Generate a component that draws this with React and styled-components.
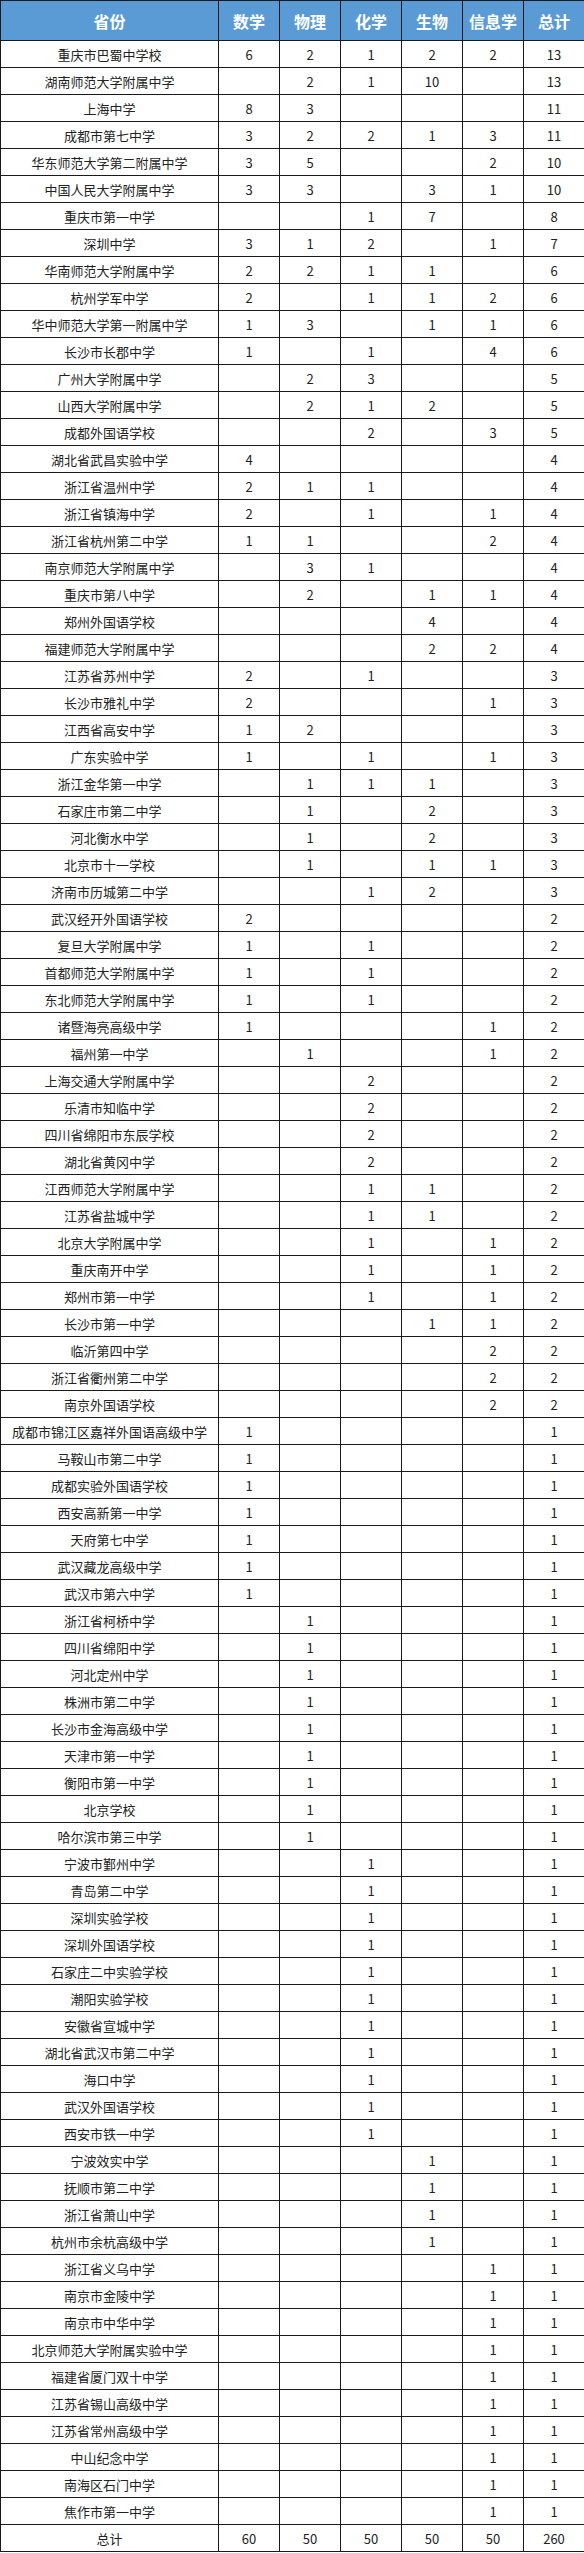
import React from 'react';
import styled, { createGlobalStyle } from 'styled-components';

const GlobalStyle = createGlobalStyle`
  html, body {
    margin: 0;
    padding: 0;
    background: #fff;
  }
  body {
    font-family: "Noto Sans CJK SC", "Noto Sans", sans-serif;
  }
`;

const Table = styled.table`
  width: 584px;
  border-collapse: collapse;
  table-layout: fixed;
  color: #222;
`;

const Col = styled.col`
  width: ${(p) => (p.$wide ? '218px' : '61px')};
`;

const HeadRow = styled.tr`
  height: 40px;
  background-color: #5b9bd5;
`;

const HeadCell = styled.th`
  border: 1px solid #1a1a1a;
  color: #fff;
  font-size: 16px;
  font-weight: 700;
  text-align: center;
  padding: 0;
`;

const Row = styled.tr`
  height: 27px;
`;

const Cell = styled.td`
  border: 1px solid #1a1a1a;
  font-size: 13px;
  text-align: center;
  padding: 0;
  white-space: nowrap;
  line-height: 1;
`;

const headers = ['省份', '数学', '物理', '化学', '生物', '信息学', '总计'];

const rows = `重庆市巴蜀中学校,6,2,1,2,2,13
湖南师范大学附属中学,,2,1,10,,13
上海中学,8,3,,,,11
成都市第七中学,3,2,2,1,3,11
华东师范大学第二附属中学,3,5,,,2,10
中国人民大学附属中学,3,3,,3,1,10
重庆市第一中学,,,1,7,,8
深圳中学,3,1,2,,1,7
华南师范大学附属中学,2,2,1,1,,6
杭州学军中学,2,,1,1,2,6
华中师范大学第一附属中学,1,3,,1,1,6
长沙市长郡中学,1,,1,,4,6
广州大学附属中学,,2,3,,,5
山西大学附属中学,,2,1,2,,5
成都外国语学校,,,2,,3,5
湖北省武昌实验中学,4,,,,,4
浙江省温州中学,2,1,1,,,4
浙江省镇海中学,2,,1,,1,4
浙江省杭州第二中学,1,1,,,2,4
南京师范大学附属中学,,3,1,,,4
重庆市第八中学,,2,,1,1,4
郑州外国语学校,,,,4,,4
福建师范大学附属中学,,,,2,2,4
江苏省苏州中学,2,,1,,,3
长沙市雅礼中学,2,,,,1,3
江西省高安中学,1,2,,,,3
广东实验中学,1,,1,,1,3
浙江金华第一中学,,1,1,1,,3
石家庄市第二中学,,1,,2,,3
河北衡水中学,,1,,2,,3
北京市十一学校,,1,,1,1,3
济南市历城第二中学,,,1,2,,3
武汉经开外国语学校,2,,,,,2
复旦大学附属中学,1,,1,,,2
首都师范大学附属中学,1,,1,,,2
东北师范大学附属中学,1,,1,,,2
诸暨海亮高级中学,1,,,,1,2
福州第一中学,,1,,,1,2
上海交通大学附属中学,,,2,,,2
乐清市知临中学,,,2,,,2
四川省绵阳市东辰学校,,,2,,,2
湖北省黄冈中学,,,2,,,2
江西师范大学附属中学,,,1,1,,2
江苏省盐城中学,,,1,1,,2
北京大学附属中学,,,1,,1,2
重庆南开中学,,,1,,1,2
郑州市第一中学,,,1,,1,2
长沙市第一中学,,,,1,1,2
临沂第四中学,,,,,2,2
浙江省衢州第二中学,,,,,2,2
南京外国语学校,,,,,2,2
成都市锦江区嘉祥外国语高级中学,1,,,,,1
马鞍山市第二中学,1,,,,,1
成都实验外国语学校,1,,,,,1
西安高新第一中学,1,,,,,1
天府第七中学,1,,,,,1
武汉藏龙高级中学,1,,,,,1
武汉市第六中学,1,,,,,1
浙江省柯桥中学,,1,,,,1
四川省绵阳中学,,1,,,,1
河北定州中学,,1,,,,1
株洲市第二中学,,1,,,,1
长沙市金海高级中学,,1,,,,1
天津市第一中学,,1,,,,1
衡阳市第一中学,,1,,,,1
北京学校,,1,,,,1
哈尔滨市第三中学,,1,,,,1
宁波市鄞州中学,,,1,,,1
青岛第二中学,,,1,,,1
深圳实验学校,,,1,,,1
深圳外国语学校,,,1,,,1
石家庄二中实验学校,,,1,,,1
潮阳实验学校,,,1,,,1
安徽省宣城中学,,,1,,,1
湖北省武汉市第二中学,,,1,,,1
海口中学,,,1,,,1
武汉外国语学校,,,1,,,1
西安市铁一中学,,,1,,,1
宁波效实中学,,,,1,,1
抚顺市第二中学,,,,1,,1
浙江省萧山中学,,,,1,,1
杭州市余杭高级中学,,,,1,,1
浙江省义乌中学,,,,,1,1
南京市金陵中学,,,,,1,1
南京市中华中学,,,,,1,1
北京师范大学附属实验中学,,,,,1,1
福建省厦门双十中学,,,,,1,1
江苏省锡山高级中学,,,,,1,1
江苏省常州高级中学,,,,,1,1
中山纪念中学,,,,,1,1
南海区石门中学,,,,,1,1
焦作市第一中学,,,,,1,1
总计,60,50,50,50,50,260`
  .split('\n')
  .map((line) => line.split(','));

export default function App() {
  return (
    <>
      <GlobalStyle />
      <Table>
        <colgroup>
          {headers.map((h, i) => (
            <Col key={h} $wide={i === 0} />
          ))}
        </colgroup>
        <thead>
          <HeadRow>
            {headers.map((h) => (
              <HeadCell key={h}>{h}</HeadCell>
            ))}
          </HeadRow>
        </thead>
        <tbody>
          {rows.map((r) => (
            <Row key={r[0]}>
              {r.map((v, i) => (
                <Cell key={i}>{v}</Cell>
              ))}
            </Row>
          ))}
        </tbody>
      </Table>
    </>
  );
}
